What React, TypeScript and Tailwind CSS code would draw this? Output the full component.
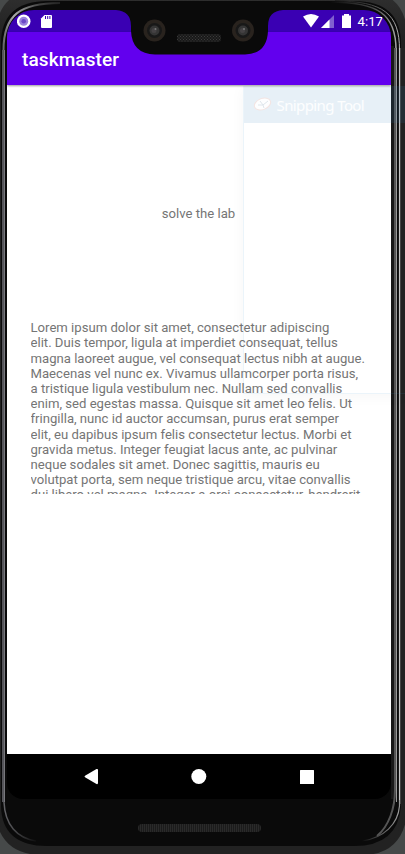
import React from "react";

const lines = [
  "Lorem ipsum dolor sit amet, consectetur adipiscing",
  "elit. Duis tempor, ligula at imperdiet consequat, tellus",
  "magna laoreet augue, vel consequat lectus nibh at augue.",
  "Maecenas vel nunc ex. Vivamus ullamcorper porta risus,",
  "a tristique ligula vestibulum nec. Nullam sed convallis",
  "enim, sed egestas massa. Quisque sit amet leo felis. Ut",
  "fringilla, nunc id auctor accumsan, purus erat semper",
  "elit, eu dapibus ipsum felis consectetur lectus. Morbi et",
  "gravida metus. Integer feugiat lacus ante, ac pulvinar",
  "neque sodales sit amet. Donec sagittis, mauris eu",
  "volutpat porta, sem neque tristique arcu, vitae convallis",
  "dui libero vel magna. Integer a orci consectetur, hendrerit",
];

function Bezel() {
  return (
    <svg className="absolute inset-0" width="405" height="854" viewBox="0 0 405 854" fill="none">
      <defs>
        <linearGradient id="body" x1="0" y1="0" x2="0" y2="1">
          <stop offset="0" stopColor="#303030" />
          <stop offset="0.06" stopColor="#202020" />
          <stop offset="1" stopColor="#222" />
        </linearGradient>
        <linearGradient id="leftRim" gradientUnits="userSpaceOnUse" x1="3" y1="0" x2="75" y2="0">
          <stop offset="0" stopColor="#66666a" />
          <stop offset="0.15" stopColor="#aaa" />
          <stop offset="0.5" stopColor="#444" />
          <stop offset="1" stopColor="#0a0a0a" />
        </linearGradient>
        <linearGradient id="rightRim" gradientUnits="userSpaceOnUse" x1="330" y1="0" x2="400" y2="0">
          <stop offset="0" stopColor="#0a0a0a" />
          <stop offset="0.6" stopColor="#444" />
          <stop offset="1" stopColor="#b5b5b5" />
        </linearGradient>
        <linearGradient id="lowLeft" gradientUnits="userSpaceOnUse" x1="3" y1="0" x2="38" y2="0">
          <stop offset="0" stopColor="#66666a" />
          <stop offset="1" stopColor="#0a0a0a" />
        </linearGradient>
        <linearGradient id="lowRight" gradientUnits="userSpaceOnUse" x1="362" y1="0" x2="398" y2="0">
          <stop offset="0" stopColor="#0a0a0a" />
          <stop offset="1" stopColor="#999" />
        </linearGradient>
      </defs>
      <path d="M0 0h405v854H0z" fill="#464949" />
      <path d="M-6 42Q-4 -9 36 -9H366Q408 -7 408 42V800Q408 855 362 855H42Q-6 855 -6 800Z" fill="url(#body)" />
      <path d="M1 44Q1 1 48 1H354Q401 1 401 44V806Q398 846 354 846H47Q2 846 1 806Z" fill="#0a0a0a" />
      <path d="M3.500 50C3.500 15 20 3 60 3" stroke="url(#leftRim)" strokeWidth="2" />
      <path d="M330 2C378 2 396 14 396 50" stroke="url(#rightRim)" strokeWidth="1.500" />
      <path d="M335 1C384 1 399.500 14 399.500 50" stroke="url(#rightRim)" strokeWidth="1" />
      <path d="M3 50V802" stroke="#55555a" strokeWidth="2" />
      <path d="M4.500 50V802" stroke="#77777c" strokeWidth="1" />
      <path d="M4 802C5 825 17 838 36 841" stroke="url(#lowLeft)" strokeWidth="1.500" />
      <path d="M392.500 46V799" stroke="#181818" strokeWidth="3" />
      <path d="M395 48V790C395 808 389 826 377 836" stroke="#555" strokeWidth="2" />
      <path d="M396.500 48V802" stroke="#999" strokeWidth="1" />
      <path d="M399.500 48V806C398 824 384 838 362 841" stroke="url(#lowRight)" strokeWidth="1.200" />
      <path d="M399.500 48V800" stroke="#c5c5c5" strokeWidth="1" />
      <path d="M400.500 48V804" stroke="#444" strokeWidth="1" />
      <path d="M403 48V802" stroke="#222" strokeWidth="4" />
    </svg>
  );
}

function Notch() {
  return (
    <svg className="absolute -left-[7px] -top-[10px] z-20" width="405" height="60" viewBox="0 0 405 60">
      <defs>
        <pattern id="mesh" width="3" height="3" patternUnits="userSpaceOnUse">
          <path d="M0 0h1v1H0zM1.5 1.5h1v1h-1z" fill="#3c3c3c" />
        </pattern>
      </defs>
      <path d="M116 9V10Q131 11 131 26V31Q132 54 155 54.5H245Q267 54 268 31V26Q268 11 283 10V9Z" fill="#0a0a0a" />
      {[154.5, 243].map((cx) => (
        <g key={cx}>
          <circle cx={cx} cy="30.5" r="11" fill="#29231e" />
          <circle cx={cx} cy="30.5" r="7.5" fill="#181818" />
          <circle cx={cx} cy="30.5" r="5" fill="#353535" />
          <circle cx={cx - 0.5} cy="30.5" r="2.5" fill="#454244" />
          <circle cx={cx + 1} cy="29" r="1" fill="#777" />
        </g>
      ))}
      <rect x="177" y="34" width="44" height="8" rx="3" fill="#191919" />
      <rect x="177" y="34" width="44" height="8" rx="3" fill="url(#mesh)" />
    </svg>
  );
}

function StatusBar() {
  return (
    <div className="flex h-[22px] shrink-0 items-center justify-between bg-[#3a00b3] pl-[10px] pr-2">
      <svg width="36" height="22" viewBox="17 10 36 22">
        <circle cx="23.7" cy="21.2" r="6.8" fill="#fff" />
        <circle cx="23.7" cy="21.2" r="4.5" fill="#9b82dc" />
        <circle cx="23.7" cy="21.2" r="2.3" fill="#6c48c7" />
        <path d="M44.5 15H51Q52 15 52 16V27Q52 28 51 28H42Q41 28 41 27V18.500Z" fill="#fff" />
        <path d="M45.500 16v3M47.700 16v3M49.900 16v3" stroke="#3a00b3" />
      </svg>
      <div className="flex items-center">
        <svg width="49" height="22" viewBox="303 10 49 22">
          <path d="M303 16.500Q311 11.500 319 16.500L311 27.500Z" fill="#fff" />
          <path d="M334 15V28H321Z" fill="#8060cf" />
          <path d="M329.500 19.500V28H321Z" fill="#fff" />
          <path d="M344 14h5v1.500h2V28h-9V15.500h2z" fill="#fff" />
        </svg>
        <span className="ml-[6px] pt-[2px] text-[13.2px] leading-[22px] text-white">4:17</span>
      </div>
    </div>
  );
}

function SnippingGhost() {
  return (
    <div className="absolute left-[243px] top-[86px] h-[308px] w-[162px] border-b border-l border-[#3c96d2]/10 shadow-[0_2px_14px_rgba(0,0,0,0.04)]">
      <div className="flex h-[37px] items-center bg-[#3c82be]/12 pl-[9px]">
        <svg width="22" height="20" viewBox="0 0 22 20">
          <ellipse cx="9.500" cy="9" rx="8.500" ry="5.500" transform="rotate(-22 9.500 9)" fill="#fff" fillOpacity=".9" stroke="#f3e4e2" />
          <path d="M5 10l5 0 5-4M10 10l1 3M7 6l3 4" stroke="#dfe6ec" fill="none" />
        </svg>
        <span className="ml-[1.500px] whitespace-nowrap pt-px font-['Noto_Sans','Open_Sans',sans-serif] text-[15px] leading-5 tracking-[-0.6px] text-white/90">Snipping Tool</span>
      </div>
    </div>
  );
}

export default function App() {
  return (
    <div className="relative h-[854px] w-[405px] overflow-hidden font-[Roboto,sans-serif]">
      <Bezel />
      <div className="relative ml-[7px] pt-[10px]">
        <div className="relative flex h-[789px] w-[384px] flex-col">
          <div className="flex h-full flex-col overflow-hidden rounded-b-[16px] rounded-t-[27px]">
            <StatusBar />
            <header className="z-10 flex h-[53px] shrink-0 items-center bg-[#6200ee] pl-[15px] pt-[2px] shadow-[0_1px_2px_rgba(0,0,0,0.4)]">
              <h1 className="text-[19px] font-medium leading-6 tracking-[0.1px] text-white">taskmaster</h1>
            </header>
            <main className="flex grow flex-col bg-white text-[13.13px] text-[#757575]">
              <p className="mr-px mt-[121px] self-center leading-[15px]">solve the lab</p>
              <div className="ml-[23.500px] mt-[99.200px] h-[173.800px] overflow-hidden whitespace-pre leading-[15.200px]">
                {lines.map((line) => (
                  <div key={line}>{line}</div>
                ))}
              </div>
            </main>
            <nav className="flex h-[45px] shrink-0 items-center bg-black">
              <svg width="384" height="45" viewBox="7 754 384 45" fill="#fff">
                <path d="M85 775.700L96.500 769Q98 768.500 98 770V783Q98 784.500 96.500 784L85 777.300Q84 776.500 85 775.700Z" />
                <circle cx="198.800" cy="776.500" r="7.500" />
                <rect x="300" y="770" width="14" height="14" rx=".5" />
              </svg>
            </nav>
          </div>
          <Notch />
        </div>
        <div className="ml-[131px] mt-[25px] h-2 w-[123px] rounded bg-[repeating-linear-gradient(90deg,#2a2a2a_0,#2a2a2a_1px,#1b1b1b_1px,#1b1b1b_2px)]" />
      </div>
      <SnippingGhost />
    </div>
  );
}
